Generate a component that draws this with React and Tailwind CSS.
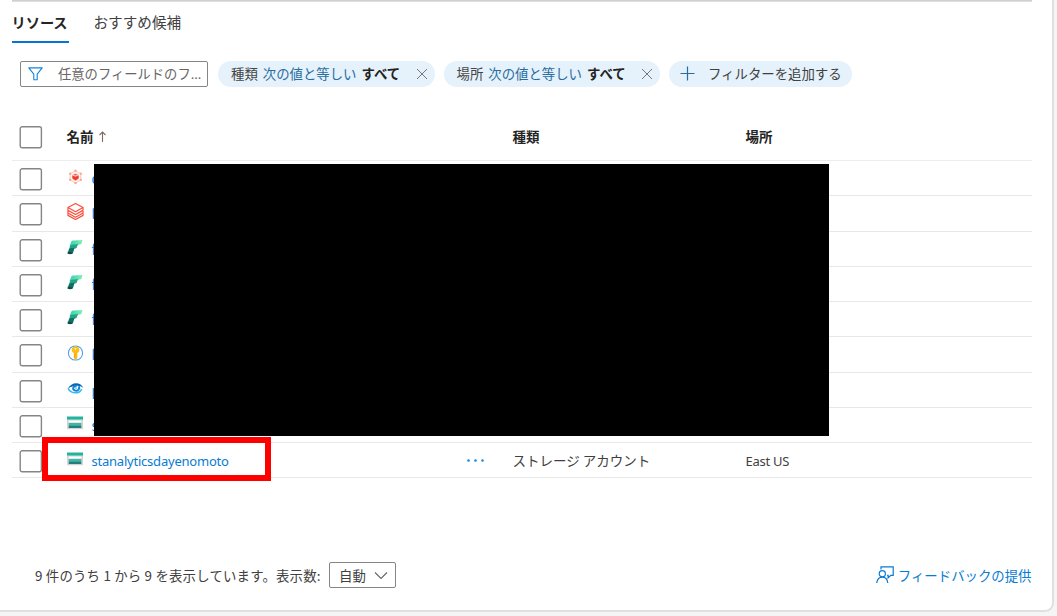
import React from "react";

function FunnelIcon() {
  return (
    <svg width="15" height="14" viewBox="0 0 15 14" fill="none" stroke="#1683d8" strokeWidth="1.1" strokeLinejoin="round">
      <path d="M.8.9h13.4L9.2 7.2v5.6H5.8V7.2z" />
    </svg>
  );
}

function CloseIcon() {
  return (
    <svg width="12" height="12" viewBox="0 0 12 12" stroke="#777" strokeWidth="1">
      <path d="M1 1l10 10M11 1L1 11" />
    </svg>
  );
}

function AtomIcon() {
  return (
    <svg width="18" height="18" viewBox="0 0 18 18" fill="none">
      <path d="M9 2.4l5.6 3.3v6.4L9 15.4l-5.6-3.3V5.7z" stroke="#f9b9ae" strokeWidth=".9" />
      <g fill="#f8aa9d">
        <circle cx="9" cy="2.4" r="1.3" />
        <circle cx="14.6" cy="5.6" r="1.3" />
        <circle cx="14.6" cy="12" r="1.3" />
        <circle cx="9" cy="15.3" r="1.3" />
        <circle cx="3.4" cy="12" r="1.3" />
        <circle cx="3.4" cy="5.6" r="1.3" />
      </g>
      <circle cx="9" cy="9" r="3.9" fill="#fbc5bc" />
      <path d="M5.7 7.3L9 8.7l3.3-1.4v3L9 12.7l-3.3-2.4z" fill="#ee3b2b" />
      <path d="M6.8 6.5L9 5.7l2.2.8L9 7.4z" fill="#f25a49" />
    </svg>
  );
}

function LayersIcon() {
  return (
    <svg width="18" height="19" viewBox="0 0 18 19" fill="none" stroke="#fb4c39" strokeWidth="1.25" strokeLinejoin="round">
      <path d="M1 5.3L9 1l8 4.3-8 4.4z" />
      <path d="M1 5.5v2.8l8 4.4 8-4.4M1 8.6v2.6l8 4.4 8-4.4v-2.6M1 11.6v2L9 18l8-4.4v-2M17 5.5v2.8" />
    </svg>
  );
}

function FabricIcon() {
  return (
    <svg width="16" height="17" viewBox="0 0 16 17">
      <defs>
        <linearGradient id="mint" x1="0" x2="1">
          <stop stopColor="#34cfb0" />
          <stop offset="1" stopColor="#82efb4" />
        </linearGradient>
      </defs>
      <path d="M4.5 2.2C5.5 1 13 1.6 15.6.8L14.4 4.8C12.8 6.5 8 5.6 2.4 7.2z" fill="url(#mint)" />
      <path d="M3.2 6.4C5 5 9 6 11.1 4.8l-1.4 4C8.2 10.2 5 9.2 1.9 11z" fill="#24a489" />
      <path d="M2 9.9C4 8.6 5.8 9.6 7.7 8.6L6 13.9c-1.4 1.3-4 1.2-5.4.5z" fill="#116f65" />
      <path d="M.8 12.5l4.8 1.2-.3 1c-1.2.6-3.1.6-4.6 0z" fill="#0b4d49" />
    </svg>
  );
}

function KeyIcon() {
  return (
    <svg width="18" height="18" viewBox="0 0 18 18">
      <circle cx="9" cy="9" r="7.5" fill="#fff" stroke="#4b9de6" strokeWidth="1.1" />
      <path d="M9 2.1c2.4 0 4.1 1.5 4.1 3.7 0 1.5-.8 2.5-2.2 3.3v5.1L9 16.4l-1.8-2.1V9.1C5.7 8.3 4.9 7.3 4.9 5.8 4.9 3.6 6.6 2.1 9 2.1z" fill="#ffbd12" />
      <circle cx="9" cy="4.6" r="1" fill="#fff4d2" />
      <path d="M8.4 9.5v4.8" stroke="#ed9d00" strokeWidth=".9" />
    </svg>
  );
}

function EyeIcon() {
  return (
    <svg width="18" height="14" viewBox="0 0 18 14" fill="none">
      <path d="M.8 7.8C4 1.4 13.3-.5 17.3 6.7c-2.1-1-3.9-2-6.4-2C7.5 4.7 4.2 5.5.8 7.8z" fill="#0867ba" />
      <path d="M1.2 7.2C3.5 12.9 12.7 14 15.5 8.1" stroke="#36bced" strokeWidth="1.7" />
      <path d="M12.4 5.2c1.8 3-1.6 5.7-4.3 4.4C5 8.1 7 4 10.1 5.4" stroke="#1681d5" strokeWidth="2" />
      <circle cx="9.6" cy="7.2" r="1.2" fill="#70dcf7" />
    </svg>
  );
}

function StorageIcon() {
  return (
    <svg width="16" height="14" viewBox="0 0 16 14">
      <path d="M0 3h16v9.5q0 .8-.8.8H.8q-.8 0-.8-.8z" fill="#d4d4d4" />
      <path d="M0 .5h16v3H0z" fill="#21b5a0" />
      <path d="M1.7 4.5h12.6v2.2H1.7z" fill="#fff" />
      <path d="M1.7 6.9h12.6v2.5H1.7z" fill="#35bba8" />
      <path d="M1.7 9.4h12.6V12H1.7z" fill="#247e7c" />
    </svg>
  );
}

function FeedbackIcon() {
  return (
    <svg width="18" height="18" viewBox="0 0 18 18" fill="none" stroke="#087bd3" strokeWidth="1.2">
      <path d="M5 3.6V.8h12.2v8.5h-2.4l-2.7 2.6V9.3h-1" />
      <circle cx="6.3" cy="7.8" r="3.1" />
      <path d="M.7 17c.6-3.7 2.5-5.8 5.6-5.8s5 2.1 5.5 5.8" />
    </svg>
  );
}

function Checkbox() {
  return (
    <svg className="block shrink-0" width="24" height="23" viewBox="0 0 24 23" fill="none" stroke="#858585" strokeWidth="1.4">
      <rect x="1.2" y=".8" width="21.2" height="21" rx="2" />
    </svg>
  );
}

function FilterChip({ label }) {
  return (
    <button className="flex h-[26px] w-[216.5px] items-center rounded-full bg-[#e5f1fb] pr-[7px] pl-[13px] text-[13.4px]">
      <span className="flex flex-1 gap-[5px] pb-[2px] whitespace-nowrap">
        <span className="text-[#444]">{label}</span>
        <span className="text-[#286d9f]">次の値と等しい</span>
        <span className="font-bold text-[#222]">すべて</span>
      </span>
      <CloseIcon />
    </button>
  );
}

const resources = [
  { Icon: AtomIcon, hint: "d" },
  { Icon: LayersIcon, hint: "l" },
  { Icon: FabricIcon, hint: "f" },
  { Icon: FabricIcon, hint: "f" },
  { Icon: FabricIcon, hint: "f" },
  { Icon: KeyIcon, hint: "k" },
  { Icon: EyeIcon, hint: "p" },
  { Icon: StorageIcon, hint: "s" },
  { Icon: StorageIcon, name: "stanalyticsdayenomoto", type: "ストレージ アカウント", location: "East US" },
];

export default function App() {
  return (
    <div className="h-[616px] w-[1057px] overflow-hidden bg-[#f5f5f5] font-['Noto_Sans_CJK_JP','Noto_Sans',sans-serif] text-[13.4px] leading-5 text-[#404040]">
      <main className="relative h-[612px] w-[1054px] rounded-br-[9px] border-r-2 border-b-2 border-[#e0e0e0] bg-white pl-[11.5px]">
        <div className="h-[2px] w-[1020px] border-b border-[#ddd] bg-[#d0d0d0]" />
        <nav className="flex h-[41px] gap-[25px]">
          <div className="h-[41px] w-[57px] border-b-2 border-[#0874d1] pt-[10px] text-[14.2px] font-bold text-[#252525]">リソース</div>
          <div className="pt-[10px] text-[14.6px]">おすすめ候補</div>
        </nav>

        <div className="mt-[17px] ml-2 flex h-[27px] items-center">
          <div className="mr-[10.5px] flex h-[26px] w-[188px] items-center rounded-[2px] border border-[#858585] pl-[7.5px]">
            <FunnelIcon />
            <span className="ml-[15px] whitespace-nowrap text-[13.3px] text-[#666]">任意のフィールドのフ<span className="font-['Noto_Sans']">...</span></span>
          </div>
          <div className="flex gap-[9px]">
            <FilterChip label="種類" />
            <FilterChip label="場所" />
            <button className="flex h-[26px] w-[183px] items-center rounded-full bg-[#e5f1fb] pl-[11px] text-[13.4px] whitespace-nowrap">
              <svg className="mr-[13px]" width="15" height="15" viewBox="0 0 15 15" stroke="#286d9f" strokeWidth="1.2"><path d="M7.5 .5v14M.5 7.5h14" /></svg>
              <span className="pb-[2px]">フィルターを追加する</span>
            </button>
          </div>
        </div>

        <section className="w-[1020px]">
          <div className="grid h-[74px] grid-cols-[55px_446px_233px_1fr] border-b border-[#ededed] text-[13.5px] font-bold text-[#242424]">
            <div className="pt-[39px] pl-[7px]"><Checkbox /></div>
            <div className="flex items-center gap-1 pt-[25px]">
              <span>名前</span>
              <svg width="9" height="11" viewBox="0 0 9 11" fill="none" stroke="#81695f" strokeWidth="1.1"><path d="M4.5 11V1M1.5 4l3-3 3 3" /></svg>
            </div>
            <div className="flex items-center pt-[25px]">種類</div>
            <div className="flex items-center pt-[25px]">場所</div>
          </div>
          {resources.map(({ Icon, hint, name, type, location }, index) => (
            <div key={index} className="grid h-[35.25px] grid-cols-[55px_25px_375px_46px_233px_1fr] border-b border-[#e8e8e8]">
              <div className="pt-[7px] pl-[7px]"><Checkbox /></div>
              <div className="flex h-[31px] w-[17px] items-center justify-center"><Icon /></div>
              <div className="flex items-center text-[#087bd3]">
                {hint ? <span>{hint}</span> : <span className="pt-[2px] font-['Noto_Sans'] text-[13px] tracking-[-0.22px]">{name}</span>}
              </div>
              <div className="flex items-center">
                {name && <svg width="17" height="3" viewBox="0 0 17 3" fill="#168bdc"><circle cx="1.5" cy="1.5" r="1.3" /><circle cx="8.5" cy="1.5" r="1.3" /><circle cx="15.5" cy="1.5" r="1.3" /></svg>}
              </div>
              <div className="flex items-center pb-[1px] text-[13.5px] whitespace-nowrap">{type}</div>
              <div className="flex items-center pt-[2px] font-['Noto_Sans'] text-[13px] tracking-[-0.25px]">{location}</div>
            </div>
          ))}
        </section>

        <footer className="mt-[83px] flex h-[28px] w-[1020px] items-center justify-between pl-[23.5px]">
          <div className="flex items-center">
            <span className="w-[294px] pb-[1px] tracking-[0.2px] whitespace-nowrap">9 件のうち 1 から 9 を表示しています。表示数:</span>
            <button className="flex h-[26px] w-[67px] items-center justify-between rounded-[2px] border border-[#858585] pr-[7px] pl-[9px]">
              自動
              <svg width="14" height="9" viewBox="0 0 14 9" fill="none" stroke="#666" strokeWidth="1.1"><path d="M1 1.5l6 6 6-6" /></svg>
            </button>
          </div>
          <a className="flex items-center gap-1 whitespace-nowrap text-[#087bd3]">
            <FeedbackIcon />フィードバックの提供
          </a>
        </footer>

        <div className="absolute top-[164px] left-[94px] h-[272px] w-[735px] bg-black" />
        <div className="absolute top-[437px] left-[42px] h-[44px] w-[229px] border-6 border-[#f00]" />
      </main>
    </div>
  );
}
